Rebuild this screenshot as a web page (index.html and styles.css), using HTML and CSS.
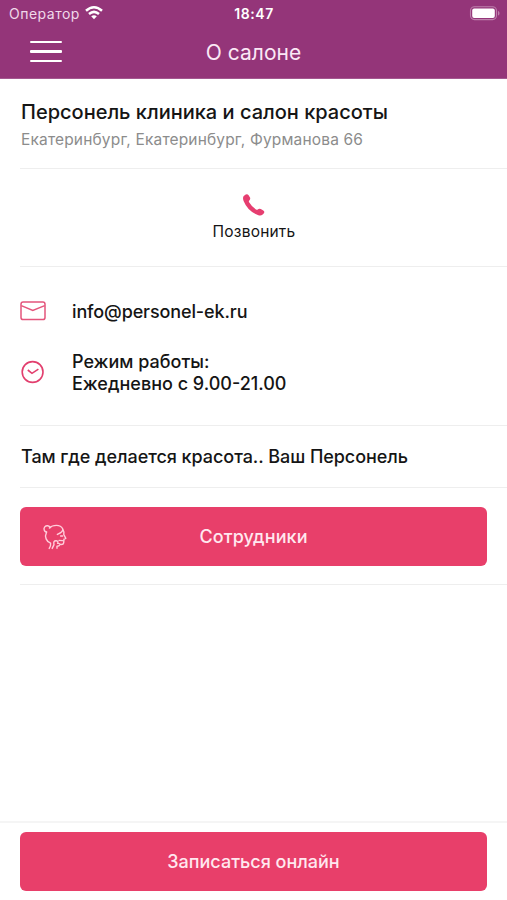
FILE: index.html
```html
<!DOCTYPE html>
<html lang="ru">
<head>
<meta charset="utf-8">
<meta name="viewport" content="width=device-width, initial-scale=1">
<title>О салоне</title>
<link rel="stylesheet" href="styles.css">
</head>
<body>
<div class="app">
  <header class="header">
    <div class="status">
      <div class="carrier">
        <span>Оператор</span>
        <svg class="wifi" viewBox="0 0 18 14" fill="none" stroke="currentColor" stroke-width="2.5"><path d="M1 4.8Q9-2.2 17 4.8M4 8Q9 3.7 14 8"/><path d="M6.2 10.3Q9 8 11.8 10.3L9 13.3Z" fill="currentColor" stroke="none"/></svg>
      </div>
      <time class="time">18:47</time>
      <svg class="battery" viewBox="0 0 32 15"><rect x="1.5" y=".8" width="26" height="12.8" rx="4" fill="none" stroke="#bd80ac" stroke-width="1.1"/><rect x="3.2" y="2.5" width="22.6" height="9.4" rx="2" fill="#fff"/><path d="M29 5v4.6c2-.7 2-3.9 0-4.6Z" fill="#bd80ac"/></svg>
    </div>
    <div class="navbar">
      <button class="menu" aria-label="Меню"><i></i><i></i><i></i></button>
      <h1 class="title">О салоне</h1>
    </div>
  </header>
  <main class="content">
    <section class="salon">
      <h2 class="name">Персонель клиника и салон красоты</h2>
      <p class="address">Екатеринбург, Екатеринбург, Фурманова 66</p>
    </section>
    <section class="call">
      <svg class="phone" viewBox="0 0 24 24" fill="currentColor"><path d="M1.7 3.1 3.7 1.5Q5.4.5 6.6 2.2L8 4.6Q8.7 6.2 7.3 7.4Q6.5 8.1 7.1 9.3Q9.5 13.5 14 16.5Q15.2 17.2 16 16.2Q17.2 15.2 18.8 16L21.3 17.5Q23 18.7 21.9 20.2L20.7 21.6Q19 23.1 16.4 22.3Q5.8 18.5 1.6 8.1Q.4 4.8 1.7 3.1Z"/></svg>
      <span class="call-label">Позвонить</span>
    </section>
    <section class="contacts">
      <div class="contact">
        <svg class="mail" viewBox="0 0 26 20" fill="none" stroke="currentColor" stroke-width="1.5"><rect x="1" y="1" width="24" height="17.6" rx="2.2"/><path d="m1.3 4.6 11.5 4.8L24.7 4.6"/></svg>
        <span class="email">info@personel-ek.ru</span>
      </div>
      <div class="contact">
        <svg class="clock" viewBox="0 0 26 26" fill="none" stroke="currentColor" stroke-width="1.6"><circle cx="12.6" cy="13" r="10.4"/><path d="m7.8 11 4.2 3.3 6.4-4.2"/></svg>
        <span class="hours"><span class="hours-label">Режим работы:</span><br>Ежедневно с 9.00-21.00</span>
      </div>
    </section>
    <section class="about">Там где делается красота.. Ваш Персонель</section>
    <section class="staff">
      <button class="button staff-button">
        <svg class="face" viewBox="0 0 26 28" fill="none" stroke="currentColor" stroke-width="1.4" stroke-linecap="round" stroke-linejoin="round"><path d="M8.3 4.6A3.3 3.3 0 1 0 4.5 9.2"/><path d="M7.4 5Q10 2.4 14.4 2.4Q19 2.4 20.8 6Q21.2 9 15.4 11.4M4.6 9C2.2 14 4.4 18.6 8.6 20.2Q9 22.8 7.2 25.4M20.8 6Q22.3 8.7 21.8 11.5L23.8 15.4L22 16.2L21.7 19.8Q21.3 21.8 18.6 21.4M18.6 13h2M10.2 25.4L12 21.6Q11 17.6 14.2 17.8Q16.8 18.2 15.6 20.4Q18.4 20.2 17.8 22Q17.2 23.2 15 23.2V25.2M17 17.4L20.6 17.6"/></svg>
        <span class="staff-label">Сотрудники</span>
      </button>
    </section>
  </main>
  <footer class="footer">
    <button class="button"><span class="book-label">Записаться онлайн</span></button>
  </footer>
</div>
</body>
</html>
```
FILE: styles.css
```css
* { box-sizing: border-box; }
body { margin: 0; background: #fff; color: #151515; font-family: Inter, "Liberation Sans", sans-serif; }
h1, h2, p { margin: 0; }
button { border: 0; padding: 0; font: inherit; color: inherit; background: none; }
svg { display: block; flex: none; }
.app { height: 900px; display: flex; flex-direction: column; overflow: hidden; }
.header { height: 79px; background: #943579; color: #fff; border-bottom: 1px solid #a45890; }
.status { height: 27px; padding: 0 6px 0 9px; display: grid; grid-template-columns: 1fr auto 1fr; align-items: center; }
.carrier { display: flex; align-items: center; gap: 5px; font-size: 14px; letter-spacing: .5px; color: #f0d9ea; }
.wifi { width: 18px; height: 14px; margin-bottom: 1px; color: #fff; }
.time { margin-right: 2px; font-size: 14px; font-weight: 600; letter-spacing: .6px; }
.battery { width: 32px; height: 15px; justify-self: end; }
.navbar { height: 51px; padding: 0 30px; display: grid; grid-template-columns: 1fr auto 1fr; align-items: center; }
.menu { width: 32px; margin-bottom: 2px; display: grid; gap: 7.6px; }
.menu i { height: 2.2px; border-radius: 1px; background: #fff; }
.title { font-size: 21px; font-weight: 400; line-height: 26px; color: #fbe8f6; }
.content { flex: 1; padding-left: 20px; }
.content > section { border-bottom: 1px solid #eee; }
.salon { height: 90px; padding: 20px 0 0 1px; }
.name { font-size: 20px; line-height: 27px; font-weight: 500; }
.address { font-size: 15.5px; line-height: 27px; color: #8c8c8c; letter-spacing: .16px; }
.call { height: 98px; padding: 24px 19px 0 0; display: flex; flex-direction: column; align-items: center; }
.phone { width: 24px; height: 24px; color: #e63e70; }
.call-label { margin-top: 4px; font-size: 15.5px; line-height: 22px; letter-spacing: .2px; }
.contacts { height: 159px; padding-top: 34px; display: flex; flex-direction: column; gap: 28px; }
.contact { display: flex; align-items: center; gap: 26px; font-size: 18px; line-height: 22px; font-weight: 500; }
.email { letter-spacing: -.12px; }
.mail { width: 26px; height: 20px; margin-bottom: 2px; color: #e4557c; }
.clock { width: 26px; height: 26px; margin-bottom: 2px; color: #e23f6e; }
.about { height: 62px; padding: 19px 0 0 1px; font-size: 18px; line-height: 24px; font-weight: 500; letter-spacing: -.05px; }
.staff { height: 97px; padding: 19px 20px 0 0; }
.button { width: 100%; height: 59px; border-radius: 6px; background: #e83f6a; color: #ffe8ef; font-size: 18px; line-height: 24px; font-weight: 500; }
.staff-button { padding: 0 22px; display: grid; grid-template-columns: 1fr auto 1fr; align-items: center; }
.staff-label { letter-spacing: .08px; }
.face { width: 26px; height: 28px; color: #ffcedb; }
.footer { height: 79px; padding: 9px 20px 0; border-top: 2px solid #f5f5f5; }
```
